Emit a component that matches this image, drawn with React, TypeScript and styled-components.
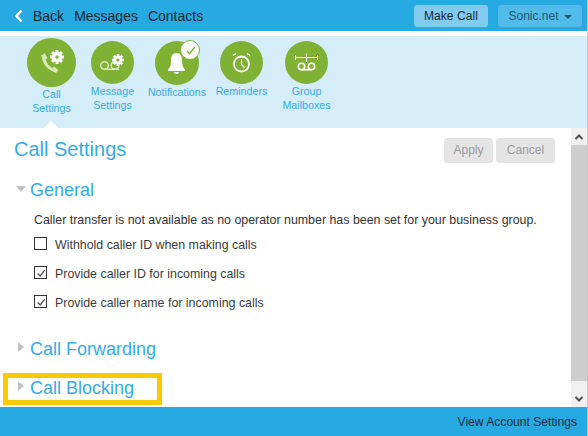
import React from "react";
import styled, { createGlobalStyle } from "styled-components";

const Global = createGlobalStyle`
  html, body { margin: 0; padding: 0; background: #fff; }
  body { font-family: "Liberation Sans", Arial, sans-serif; }
`;

const Page = styled.div`
  position: relative;
  width: 587px;
  height: 436px;
  display: flex;
  flex-direction: column;
  overflow: hidden;
  border-right: 1px solid #c8c8c8;
`;

const TopBar = styled.header`
  height: 31px;
  flex: none;
  background: #27a9e1;
  display: flex;
  align-items: center;
  padding: 0 5px 0 14px;
  font-size: 14px;
  color: #1c2733;
`;

const BackChevron = styled.svg`
  width: 10px;
  height: 14px;
  margin-right: 9px;
`;

const BackLabel = styled.span`
  margin-top: 1px;
  margin-right: 10px;
`;

const NavLink = styled.span`
  margin-right: 10px;
`;

const Spacer = styled.div`
  flex: 1;
`;

const MakeCall = styled.div`
  width: 74px;
  height: 22px;
  border-radius: 3px;
  background: #80cbee;
  font-size: 12px;
  line-height: 22px;
  text-align: center;
  margin-right: 10px;
  letter-spacing: 0.1px;
`;

const Account = styled.div`
  width: 84px;
  height: 22px;
  border-radius: 3px;
  background: #52bbea;
  color: #24566f;
  font-size: 12px;
  display: flex;
  align-items: center;
  justify-content: center;
  gap: 5px;
`;

const Caret = styled.span`
  width: 0;
  height: 0;
  border-left: 4px solid transparent;
  border-right: 4px solid transparent;
  border-top: 4px solid #24566f;
  margin-top: 2px;
`;

const IconStrip = styled.nav`
  margin-top: 5px;
  height: 92px;
  flex: none;
  background: #d4edf9;
  display: flex;
  align-items: flex-start;
  padding-left: 27px;
  position: relative;
`;

const Item = styled.div<{ $w: number; $mr?: number; $active?: boolean }>`
  width: ${(p) => p.$w}px;
  margin-right: ${(p) => p.$mr ?? 0}px;
  flex: none;
  display: flex;
  flex-direction: column;
  align-items: center;
  padding-top: ${(p) => (p.$active ? 2 : 5)}px;
  color: #35ace6;
  font-size: 10.7px;
  line-height: 14px;
  text-align: center;
`;

const Circle = styled.div<{ $size: number }>`
  position: relative;
  width: ${(p) => p.$size}px;
  height: ${(p) => p.$size}px;
  border-radius: 50%;
  background: #7fb135;
  margin-bottom: 0;
  display: flex;
  align-items: center;
  justify-content: center;
`;

const WideLabel = styled.div`
  margin: 0 -10px;
`;

const Badge = styled.div`
  position: absolute;
  top: -1px;
  right: -1px;
  width: 18px;
  height: 18px;
  border-radius: 50%;
  background: #fff;
  border: 1px solid #7fb135;
  display: flex;
  align-items: center;
  justify-content: center;
`;

const Pointer = styled.div`
  position: absolute;
  left: 44px;
  bottom: 0;
  width: 0;
  height: 0;
  border-left: 7px solid transparent;
  border-right: 7px solid transparent;
  border-bottom: 7px solid #fff;
`;

const Body = styled.div`
  flex: 1;
  display: flex;
  min-height: 0;
`;

const Content = styled.main`
  flex: 1;
  padding: 10px 0 0 14px;
  min-width: 0;
`;

const TitleRow = styled.div`
  display: flex;
  align-items: flex-start;
  justify-content: space-between;
  padding-right: 16px;
  height: 41px;
`;

const Title = styled.h1`
  margin: 0;
  font-size: 20px;
  line-height: 23px;
  font-weight: 400;
  color: #35ace6;
`;

const Buttons = styled.div`
  display: flex;
  gap: 3px;
`;

const GreyButton = styled.div<{ $w: number }>`
  width: ${(p) => p.$w}px;
  height: 25px;
  border-radius: 3px;
  background: #e4e4e4;
  color: #9a9a9a;
  font-size: 12px;
  line-height: 25px;
  text-align: center;
`;

const SectionHead = styled.div<{ $mt?: number }>`
  display: flex;
  align-items: center;
  margin-top: ${(p) => p.$mt ?? 0}px;
  height: 23px;
  font-size: 18px;
  color: #35ace6;
`;

const TriDown = styled.span`
  width: 0;
  height: 0;
  margin: -3px 4px 0 2px;
  border-left: 5px solid transparent;
  border-right: 5px solid transparent;
  border-top: 6px solid #c4c4c4;
`;

const TriRight = styled.span`
  width: 0;
  height: 0;
  margin: -5px 6px 0 4px;
  border-top: 5px solid transparent;
  border-bottom: 5px solid transparent;
  border-left: 6px solid #c4c4c4;
`;

const SectionBody = styled.div`
  padding: 11px 0 0 20px;
  font-size: 12.4px;
  color: #333;
`;

const Note = styled.div`
  line-height: 14px;
  margin-bottom: 3px;
`;

const CheckRow = styled.div`
  display: flex;
  align-items: center;
  height: 29px;
  color: #3c3c3c;
`;

const Box = styled.span`
  width: 11px;
  height: 11px;
  flex: none;
  border: 1px solid #333;
  background: #fff;
  margin-right: 8px;
  margin-top: -2px;
  box-sizing: content-box;
  display: flex;
  align-items: center;
  justify-content: center;
`;

const Scrollbar = styled.aside`
  width: 16px;
  flex: none;
  background: #f0f0f0;
  display: flex;
  flex-direction: column;
`;

const ScrollBtn = styled.div`
  height: 17px;
  flex: none;
  display: flex;
  align-items: center;
  justify-content: center;
`;

const Thumb = styled.div`
  flex: 1;
  background: #cdcdcd;
  margin-bottom: 9px;
`;

const Footer = styled.footer`
  height: 29px;
  flex: none;
  background: #27a9e1;
  display: flex;
  align-items: center;
  justify-content: flex-end;
  padding-right: 10px;
  font-size: 12.1px;
  color: #1c2f40;
`;

const Highlight = styled.div`
  position: absolute;
  left: 3px;
  top: 373px;
  width: 149px;
  height: 22px;
  border: 5px solid #ffc800;
`;

const Gear = ({ x, y, r }: { x: number; y: number; r: number }) => (
  <g transform={`translate(${x} ${y})`} fill="#fff">
    <circle r={r * 0.72} />
    {[0, 45, 90, 135, 180, 225, 270, 315].map((a) => (
      <rect key={a} x={-r * 0.22} y={-r} width={r * 0.44} height={r * 0.5} transform={`rotate(${a})`} />
    ))}
    <circle r={r * 0.26} fill="#7fb135" />
  </g>
);

const Check = ({ color, size }: { color: string; size: number }) => (
  <svg width={size} height={size} viewBox="0 0 12 12" fill="none">
    <path d="M2 6.5 L5 9.5 L10.5 2.5" stroke={color} strokeWidth="1.6" />
  </svg>
);

const Chev = ({ d }: { d: string }) => (
  <svg width="10" height="8" viewBox="0 0 10 8" fill="none">
    <path d={d} stroke="#505050" strokeWidth="2" />
  </svg>
);

export default function App() {
  return (
    <Page>
      <Global />
      <TopBar>
        <BackChevron viewBox="0 0 10 14" fill="none">
          <path d="M7.5 1.5 L2.5 7 L7.5 12.5" stroke="#fff" strokeWidth="2.6" />
        </BackChevron>
        <BackLabel>Back</BackLabel>
        <NavLink>Messages</NavLink>
        <NavLink>Contacts</NavLink>
        <Spacer />
        <MakeCall>Make Call</MakeCall>
        <Account>
          Sonic.net <Caret />
        </Account>
      </TopBar>
      <IconStrip>
        <Item $w={49} $mr={15} $active>
          <Circle $size={49}>
            <svg width="49" height="49" viewBox="0 0 49 49" fill="none">
              <path d="M16.5 18 C16.5 25 21.5 31 29 33" stroke="#d8e8b8" strokeWidth="3" />
              <path d="M14 17.5 L18 15.5 L20.5 20.5 L17 22 Z M25 31 L27 28.5 L31.5 32 L29 35 Z" fill="#d8e8b8" />
              <Gear x={30} y={19} r={7} />
            </svg>
          </Circle>
          <div>Call</div>
          <div>Settings</div>
        </Item>
        <Item $w={43} $mr={21}>
          <Circle $size={43}>
            <svg width="43" height="43" viewBox="0 0 43 43" fill="none">
              <circle cx="13.5" cy="24.5" r="3.8" stroke="#d8e8b8" strokeWidth="1.5" />
              <circle cx="24" cy="24.5" r="3.8" stroke="#d8e8b8" strokeWidth="1.5" />
              <path d="M13.5 28.3 H28" stroke="#d8e8b8" strokeWidth="1.5" />
              <Gear x={27} y={19} r={6} />
            </svg>
          </Circle>
          <div>Message</div>
          <div>Settings</div>
        </Item>
        <Item $w={44} $mr={21}>
          <Circle $size={44}>
            <svg width="44" height="44" viewBox="0 0 44 44" fill="#fff">
              <path d="M21.5 12 C17.5 12 16 15 16 19 C16 24 15 27 13 28.5 V30 H30 V28.5 C28 27 27 24 27 19 C27 15 25.5 12 21.5 12 Z" />
              <path d="M19 31 H24 A2.5 2 0 0 1 19 31 Z" />
            </svg>
            <Badge>
              <Check color="#7fb135" size={11} />
            </Badge>
          </Circle>
          <WideLabel>Notifications</WideLabel>
        </Item>
        <Item $w={43} $mr={22}>
          <Circle $size={43}>
            <svg width="43" height="43" viewBox="0 0 43 43" fill="none" stroke="#fff">
              <circle cx="21.5" cy="23" r="7.5" strokeWidth="1.8" />
              <path d="M21.5 18 V23.5 L24.5 26.5" strokeWidth="1.1" />
              <path d="M13 14.5 L16 12.5 M30 14.5 L27 12.5" strokeWidth="1.3" />
            </svg>
          </Circle>
          <div>Reminders</div>
        </Item>
        <Item $w={43}>
          <Circle $size={43}>
            <svg width="43" height="43" viewBox="0 0 43 43" fill="none" stroke="#fff">
              <path d="M10.5 14 V19 M32.5 14 V19 M10.5 16.5 H32.5 M21.5 12.5 V21" strokeWidth="1.1" />
              <circle cx="16.5" cy="25.5" r="3.2" strokeWidth="1.6" />
              <circle cx="26.5" cy="25.5" r="3.2" strokeWidth="1.6" />
              <path d="M16.5 28.7 H26.5" strokeWidth="1.6" />
            </svg>
          </Circle>
          <div>Group</div>
          <div>Mailboxes</div>
        </Item>
        <Pointer />
      </IconStrip>
      <Body>
        <Content>
          <TitleRow>
            <Title>Call Settings</Title>
            <Buttons>
              <GreyButton $w={49}>Apply</GreyButton>
              <GreyButton $w={59}>Cancel</GreyButton>
            </Buttons>
          </TitleRow>
          <SectionHead>
            <TriDown />
            General
          </SectionHead>
          <SectionBody>
            <Note>Caller transfer is not available as no operator number has been set for your business group.</Note>
            <CheckRow>
              <Box />
              Withhold caller ID when making calls
            </CheckRow>
            <CheckRow>
              <Box>
                <Check color="#555" size={10} />
              </Box>
              Provide caller ID for incoming calls
            </CheckRow>
            <CheckRow>
              <Box>
                <Check color="#555" size={10} />
              </Box>
              Provide caller name for incoming calls
            </CheckRow>
          </SectionBody>
          <SectionHead $mt={21}>
            <TriRight />
            Call Forwarding
          </SectionHead>
          <SectionHead $mt={16}>
            <TriRight />
            Call Blocking
          </SectionHead>
        </Content>
        <Scrollbar>
          <ScrollBtn>
            <Chev d="M1.5 6 L5 2.5 L8.5 6" />
          </ScrollBtn>
          <Thumb />
          <ScrollBtn>
            <Chev d="M1.5 2 L5 5.5 L8.5 2" />
          </ScrollBtn>
        </Scrollbar>
      </Body>
      <Footer>View Account Settings</Footer>
      <Highlight />
    </Page>
  );
}
